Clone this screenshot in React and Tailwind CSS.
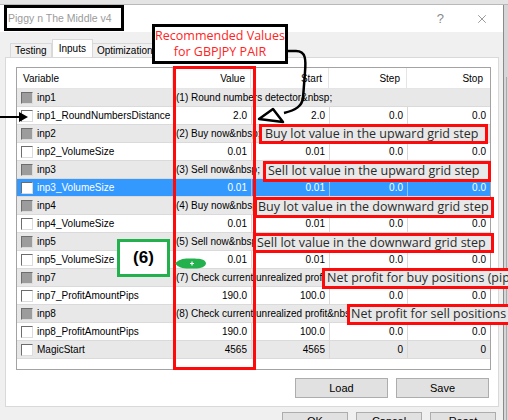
import { X } from 'lucide-react';

const rows = [
  { group: true, name: 'inp1', text: '(1) Round numbers detector&nbsp;' },
  { name: 'inp1_RoundNumbersDistance', vals: ['2.0', '2.0', '0.0', '0.0'] },
  { group: true, name: 'inp2', text: '(2) Buy now&nbsp;' },
  { name: 'inp2_VolumeSize', vals: ['0.01', '0.01', '0.0', '0.0'] },
  { group: true, name: 'inp3', text: '(3) Sell now&nbsp;' },
  { name: 'inp3_VolumeSize', vals: ['0.01', '0.01', '0.0', '0.0'], selected: true },
  { group: true, name: 'inp4', text: '(4) Buy now&nbsp;' },
  { name: 'inp4_VolumeSize', vals: ['0.01', '0.01', '0.0', '0.0'] },
  { group: true, name: 'inp5', text: '(5) Sell now&nbsp;' },
  { name: 'inp5_VolumeSize', vals: ['0.01', '0.01', '0.0', '0.0'] },
  { group: true, name: 'inp7', text: '(7) Check current unrealized profit' },
  { name: 'inp7_ProfitAmountPips', vals: ['190.0', '100.0', '0.0', '0.0'] },
  { group: true, name: 'inp8', text: '(8) Check current unrealized profit&nbsp;' },
  { name: 'inp8_ProfitAmountPips', vals: ['190.0', '100.0', '0.0', '0.0'] },
  { name: 'MagicStart', vals: ['4565', '4565', '0', '0'], shaded: true },
];

const notes = [
  { text: 'Buy lot value in the upward grid step', cls: 'left-[259px] top-[124px] w-[229px] h-[20px] pl-[3px]' },
  { text: 'Sell lot value in the upward grid step', cls: 'left-[263px] top-[161px] w-[228px] h-[21px] pl-[2px]' },
  { text: 'Buy lot value in the downward grid step', cls: 'left-[254px] top-[197px] w-[240px] h-[21px] pl-[1px]' },
  { text: 'Sell lot value in the downward grid step', cls: 'left-[253px] top-[233px] w-[241px] h-[20px] pl-[1px]' },
  { text: 'Net profit for buy positions (pips)', cls: 'left-[322px] top-[268px] w-[200px] h-[21px] pl-[2px]' },
  { text: 'Net profit for sell positions', cls: 'left-[347px] top-[304px] w-[180px] h-[21px] pl-[1px]' },
];

const Check = ({ dim }) => (
  <span
    className={`w-[12px] h-[12px] shrink-0 border border-t-[#6d6d6d] border-l-[#6d6d6d] border-r-[#dcdcdc] border-b-[#dcdcdc] ${
      dim ? 'bg-[#9c9c9c]' : 'bg-white'
    }`}
  />
);

const Row = ({ row }) => {
  const bg = row.selected
    ? 'bg-[#3399ff] text-white'
    : row.group || row.shaded
    ? 'bg-[#e8e8e8] text-black'
    : 'bg-white text-black';
  const sep = row.selected ? 'border-[#8cc4ff]' : 'border-[#d8d8d8]';

  return (
    <div className={`grid grid-cols-[156px_78px_78px_78px_83px] h-[18px] shrink-0 border-b border-[#dadada] ${bg}`}>
      <div className="flex items-center pl-[4px] gap-[4px] overflow-hidden whitespace-nowrap">
        <Check dim={row.group} />
        <span>{row.name}</span>
      </div>
      {row.group ? (
        <div className="col-span-4 flex items-center pl-[3px] overflow-hidden whitespace-nowrap">{row.text}</div>
      ) : (
        row.vals.map((v, i) => (
          <div key={i} className={`flex items-center justify-end pr-[4px] border-l ${sep}`}>
            {v}
          </div>
        ))
      )}
    </div>
  );
};

export default function App() {
  return (
    <div className="relative w-[508px] h-[420px] overflow-hidden bg-[#d6d6d6] font-['Liberation_Sans',Arial,sans-serif] text-[10px]">
      <div className="h-[5px] bg-[#e4e4e4] border-b border-[#b9b9b9]" />

      <div className="flex h-[415px] overflow-hidden">
        {/* dialog window */}
        <div className="w-[504px] shrink-0 flex flex-col bg-[#f0f0f0] border-r border-[#8a8a8a]">
          <div className="h-[27px] shrink-0 bg-white flex items-center pl-[8px] pr-[14px]">
            <span className="text-[10.5px] text-[#9b9b9b]">Piggy n The Middle v4</span>
            <span className="ml-auto text-[13px] text-[#8a8a8a] mr-[31px]">?</span>
            <X className="w-[14px] h-[14px] text-[#707070]" strokeWidth={1.2} />
          </div>

          {/* tabs */}
          <div className="flex items-end shrink-0 pl-[8px] pt-[7px] h-[25px]">
            <div className="h-[14px] px-[4px] ml-[2px] flex items-center border border-b-0 border-[#d9d9d9] bg-[#f0f0f0]">Testing</div>
            <div className="h-[18px] px-[6px] flex items-center border border-b-0 border-[#d9d9d9] bg-white relative z-10">Inputs</div>
            <div className="h-[14px] px-[4px] flex items-center border border-b-0 border-l-0 border-[#d9d9d9] bg-[#f0f0f0]">Optimization</div>
          </div>

          <div className="ml-[5px] mr-[4px] h-[350px] shrink-0 bg-white border border-[#d9d9d9] flex flex-col pl-[10px] pt-[9px] pr-[7px]">
            {/* parameter list */}
            <div className="w-[475px] h-[303px] shrink-0 border border-[#a3a3a3] bg-white flex flex-col">
              <div className="grid grid-cols-[156px_78px_78px_78px_83px] h-[21px] shrink-0 border-b border-[#e5e5e5] text-black">
                <div className="flex items-center pl-[6px] border-r border-[#e5e5e5]">Variable</div>
                <div className="flex items-center justify-end pr-[5px] border-r border-[#e5e5e5]">Value</div>
                <div className="flex items-center justify-end pr-[6px] border-r border-[#e5e5e5]">Start</div>
                <div className="flex items-center justify-end pr-[6px] border-r border-[#e5e5e5]">Step</div>
                <div className="flex items-center justify-end pr-[7px]">Stop</div>
              </div>
              {rows.map((r) => (
                <Row key={r.name} row={r} />
              ))}
            </div>

            <div className="flex justify-end gap-[8px] mt-[8px] pr-[2px]">
              <button className="w-[93px] h-[20px] bg-[#e1e1e1] border border-[#adadad] text-[11px]">Load</button>
              <button className="w-[93px] h-[20px] bg-[#e1e1e1] border border-[#adadad] text-[11px]">Save</button>
            </div>
          </div>

          <div className="flex justify-end shrink-0 gap-[8px] pt-[5px] pr-[7px]">
            <button className="w-[66px] h-[22px] bg-[#e1e1e1] border border-[#adadad] text-[11px] leading-[14px] flex justify-center pt-[1px]">OK</button>
            <button className="w-[66px] h-[22px] bg-[#e1e1e1] border border-[#adadad] text-[11px] leading-[14px] flex justify-center pt-[1px]">Cancel</button>
            <button className="w-[66px] h-[22px] bg-[#e1e1e1] border border-[#adadad] text-[11px] leading-[14px] flex justify-center pt-[1px]">Reset</button>
          </div>
        </div>
        <div className="flex-1 bg-[#d6d6d6] flex justify-center pt-[72px]">
          <div className="w-px h-full bg-[#a9a9a9]" />
        </div>
      </div>

      {/* markup drawn over the dialog */}
      <div className="absolute left-[4px] top-[5px] w-[120px] h-[26px] border-[3px] border-black" />

      <div className="absolute left-[152px] top-[24px] w-[136px] h-[40px] border-[3px] border-black bg-white flex flex-col items-center justify-center font-['Open_Sans',sans-serif] text-[12.5px] leading-[16px] text-[#ff2424]">
        <span>Recommended Values</span>
        <span>for GBPJPY PAIR</span>
      </div>

      <svg className="absolute left-0 top-0 pointer-events-none" width="508" height="420">
        <path d="M286 51 L296 51 C306 51 306 60 305 72 L303 98 C302 106 296 110 284 113" fill="none" stroke="#000" strokeWidth="2.5" />
        <polygon points="259,119 273,109 283,122" fill="#fff" stroke="#000" strokeWidth="2.5" strokeLinejoin="round" />
        <line x1="0" y1="117" x2="20" y2="117" stroke="#000" strokeWidth="2" />
        <polygon points="28,117 19,112 19,122" fill="#000" />
      </svg>

      <div className="absolute left-[173px] top-[66px] w-[83px] h-[304px] border-[3px] border-[#ff0a0a]" />

      {notes.map((n) => (
        <div
          key={n.text}
          className={`absolute ${n.cls} border-[3px] border-[#ff0a0a] bg-[#e8e8e8] flex items-center whitespace-nowrap overflow-hidden font-['Open_Sans',sans-serif] text-[12.5px] text-[#2b2b2b]`}
        >
          {n.text}
        </div>
      ))}

      <div className="absolute left-[117px] top-[239px] w-[53px] h-[38px] border-[3px] border-[#22b14c] bg-white flex items-center justify-center font-['Liberation_Sans',Arial,sans-serif] font-bold text-[17px] text-black">
        (6)
      </div>

      <svg className="absolute left-[174px] top-[255px]" width="34" height="17" viewBox="0 0 34 17">
        <path d="M1 8.5 C5 4 10 3 18 3.5 C25 3.5 31 4 32 8 C32 12 26 14 18 13.5 C10 14 5 13 1 8.5 Z" fill="#22b14c" />
        <path d="M18 6.5 V10.5 M16 8.5 H20" stroke="#fff" strokeWidth="1.2" />
      </svg>
    </div>
  );
}
